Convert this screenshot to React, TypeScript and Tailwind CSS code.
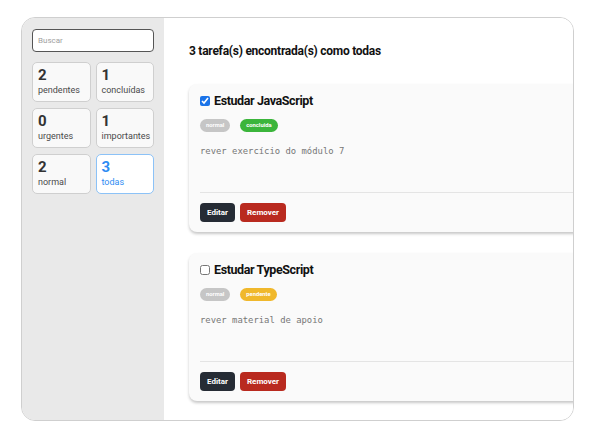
import React from "react"

interface Stat {
  count: number
  label: string
  active?: boolean
}

interface Task {
  title: string
  done: boolean
  priority: string
  description: string
}

const stats: Stat[] = [
  { count: 2, label: "pendentes" },
  { count: 1, label: "concluídas" },
  { count: 0, label: "urgentes" },
  { count: 1, label: "importantes" },
  { count: 2, label: "normal" },
  { count: 3, label: "todas", active: true },
]

const tasks: Task[] = [
  { title: "Estudar JavaScript", done: true, priority: "normal", description: "rever exercício do módulo 7" },
  { title: "Estudar TypeScript", done: false, priority: "normal", description: "rever material de apoio" },
]

const StatCard: React.FC<{ stat: Stat }> = ({ stat }) => (
  <div
    className={`h-[40px] rounded-[5px] border px-[5px] pt-[4px] ${
      stat.active ? "border-[#8cc2f7] bg-white text-[#2f8cf3]" : "border-[#cfcfcf] bg-[#f9f9f9] text-[#333]"
    }`}
  >
    <div className="text-[15px] font-bold leading-[17px]">{stat.count}</div>
    <div className={`text-[9px] leading-[12px] ${stat.active ? "text-[#2f8cf3]" : "text-[#4a4a4a]"}`}>
      {stat.label}
    </div>
  </div>
)

const TaskCard: React.FC<{ task: Task }> = ({ task }) => (
  <div className="w-[420px] shrink-0 rounded-[8px] bg-[#fafafa] px-[11px] pt-[11px] pb-[10px] shadow-[0_2px_3px_rgba(0,0,0,0.22)]">
    <div className="flex h-[12px] items-center gap-[4px]">
      <input
        type="checkbox"
        checked={task.done}
        readOnly
        className="m-0 h-[10px] w-[10px] accent-[#1a73e8]"
      />
      <span className="text-[12.5px] font-bold leading-[12px] tracking-[-0.4px] text-[#111]">{task.title}</span>
    </div>
    <div className="mt-[12px] flex gap-[10px]">
      <span className="flex h-[13px] items-center rounded-full bg-[#c6c6c6] px-[6px] text-[5.8px] font-bold text-white">
        {task.priority}
      </span>
      <span
        className={`flex h-[13px] items-center rounded-full px-[6px] text-[5.8px] font-bold text-white ${
          task.done ? "bg-[#3bb53b]" : "bg-[#f0b82c]"
        }`}
      >
        {task.done ? "concluida" : "pendente"}
      </span>
    </div>
    <div className="mt-[13px] h-[47px] font-['DejaVu_Sans_Mono',monospace] text-[8.9px] leading-[12px] text-[#777]">
      {task.description}
    </div>
    <div className="flex gap-[5px] border-t border-[#e4e4e4] pt-[10px]">
      <button className="h-[19px] rounded-[4px] bg-[#262c35] px-[7px] text-[8px] font-bold text-white">Editar</button>
      <button className="h-[19px] rounded-[4px] bg-[#b92a1f] px-[7px] text-[8px] font-bold text-white">Remover</button>
    </div>
  </div>
)

const App: React.FC = () => {
  return (
    <div className="h-[446px] w-[595px] bg-white pl-[21px] pt-[17px] font-['Roboto',sans-serif]">
      <div className="flex h-[404px] w-[553px] overflow-hidden rounded-[14px] border border-[#cfcfcf]">
        <div className="w-[142px] shrink-0 bg-[#e9e9e9] px-[10px] pt-[11px]">
          <div className="flex h-[23px] items-center rounded-[4px] border-[1.5px] border-[#555] bg-white px-[5px] text-[8px] text-[#a0a0a0]">
            Buscar
          </div>
          <div className="mt-[10px] grid grid-cols-2 gap-x-[5px] gap-y-[6px]">
            {stats.map((s) => (
              <StatCard key={s.label} stat={s} />
            ))}
          </div>
        </div>
        <div className="flex-1 overflow-hidden bg-white pl-[25px] pt-[26px]">
          <h1 className="text-[12px] font-bold leading-[14px] tracking-[-0.25px] text-[#111]">
            3 tarefa(s) encontrada(s) como todas
          </h1>
          <div className="mt-[26px] flex flex-col gap-[21px]">
            {tasks.map((t) => (
              <TaskCard key={t.title} task={t} />
            ))}
          </div>
        </div>
      </div>
    </div>
  )
}

export default App
